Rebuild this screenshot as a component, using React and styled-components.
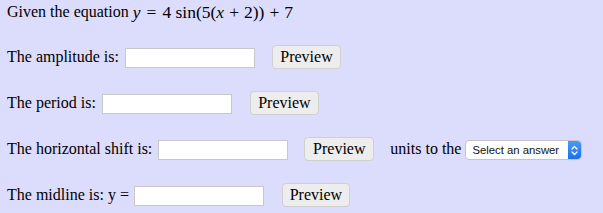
import React from "react";
import styled, { createGlobalStyle } from "styled-components";

const Global = createGlobalStyle`
  html, body { margin: 0; padding: 0; background: #dcdcfc; }
  body { font-family: "Liberation Serif", "Times New Roman", serif; font-size: 16px; color: #000; }
`;

const Page = styled.div`
  width: 603px;
  height: 213px;
  padding: 0 0 0 7px;
  box-sizing: border-box;
  background: #dcdcfc;
  display: flex;
  flex-direction: column;
  overflow: hidden;
`;

const Intro = styled.div`
  flex: 0 0 24px;
  display: flex;
  align-items: center;
  white-space: pre;
  margin-bottom: 10px;
`;

const Math = styled.span`
  font-family: "Liberation Serif", serif;
  font-size: 17.5px;
  margin-left: 4px;
  white-space: pre;
`;

const MI = styled.i`
  font-style: italic;
`;

const MO = styled.span`
  margin: 0 ${(p) => p.$sp ?? 5}px;
`;

const Row = styled.div`
  flex: 0 0 46px;
  display: flex;
  align-items: center;
`;

const Label = styled.span`
  white-space: pre;
  margin-right: ${(p) => p.$mr || 6}px;
`;

const Input = styled.input`
  box-sizing: border-box;
  width: 130px;
  height: 20px;
  border: 1px solid #c8c8c8;
  background: #fff;
  padding: 0 3px;
  margin: 1px 0 0;
  outline: none;
`;

const Button = styled.button`
  box-sizing: border-box;
  height: 24px;
  width: ${(p) => p.$w || 69}px;
  margin-left: ${(p) => p.$ml || 17}px;
  padding: 0;
  border: 1px solid #d0d0d0;
  border-radius: 4px;
  background: #ededed;
  font-family: "Liberation Serif", "Times New Roman", serif;
  font-size: 16px;
  color: #000;
`;

const Units = styled.span`
  margin-left: 16px;
  margin-right: 4px;
  white-space: pre;
`;

const Select = styled.div`
  box-sizing: border-box;
  width: 117px;
  height: 20px;
  border: 1px solid #c4c4c4;
  border-radius: 4px;
  background: #fff;
  display: flex;
  align-items: center;
  justify-content: space-between;
  overflow: hidden;
  margin-top: 2px;
`;

const SelectText = styled.span`
  font-family: "Liberation Sans", Arial, sans-serif;
  font-size: 11.3px;
  padding-left: 6px;
  color: #111;
  white-space: nowrap;
`;

const Stepper = styled.span`
  flex: 0 0 13px;
  height: 18px;
  background: linear-gradient(#4a9bf7, #1a6ff0);
  border-radius: 0 3px 3px 0;
  display: flex;
  align-items: center;
  justify-content: center;
`;

export default function App() {
  return (
    <>
      <Global />
      <Page>
        <Intro>
          Given the equation
          <Math>
            <MI>y</MI>
            <MO $sp={6}>=</MO>4<MO $sp={0}> </MO>sin(5(<MI>x</MI>
            <MO>+</MO>2))<MO>+</MO>7
          </Math>
        </Intro>
        <Row>
          <Label>The amplitude is:</Label>
          <Input />
          <Button>Preview</Button>
        </Row>
        <Row>
          <Label>The period is:</Label>
          <Input />
          <Button $ml={18}>Preview</Button>
        </Row>
        <Row>
          <Label>The horizontal shift is:</Label>
          <Input />
          <Button $ml={16} $w={70}>Preview</Button>
          <Units>units to the</Units>
          <Select>
            <SelectText>Select an answer</SelectText>
            <Stepper>
              <svg width="7" height="11" viewBox="0 0 7 11" fill="none" stroke="#fff" strokeWidth="1.3" strokeLinecap="round" strokeLinejoin="round">
                <path d="M1 4 L3.5 1.5 L6 4" />
                <path d="M1 7 L3.5 9.5 L6 7" />
              </svg>
            </Stepper>
          </Select>
        </Row>
        <Row>
          <Label $mr={5}>The midline is: y =</Label>
          <Input />
          <Button $ml={18} $w={68}>Preview</Button>
        </Row>
      </Page>
    </>
  );
}
